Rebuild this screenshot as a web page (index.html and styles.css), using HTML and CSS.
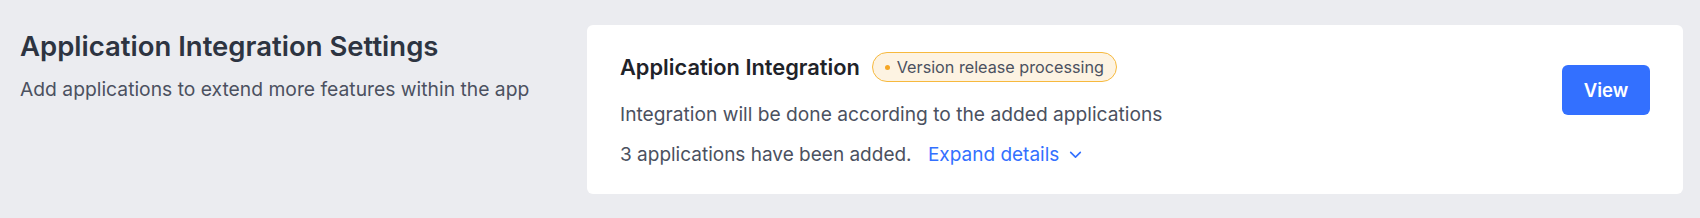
FILE: index.html
```html
<!DOCTYPE html>
<html lang="en">
<head>
    <meta charset="UTF-8">
    <meta name="viewport" content="width=device-width, initial-scale=1.0">
    <title>Application Integration Settings</title>
    <link rel="stylesheet" href="styles.css">
</head>
<body>

    <div class="settings-row">
        <!-- Описание раздела -->
        <div class="intro">
            <h2>Application Integration Settings</h2>
            <p>Add applications to extend more features within the app</p>
        </div>

        <!-- Карточка интеграции -->
        <div class="card">
            <div class="card-main">
                <div class="card-title">
                    <span>Application Integration</span>
                    <span class="badge"><span class="dot"></span>Version release processing</span>
                </div>
                <div class="card-desc">Integration will be done according to the added applications</div>
                <div class="card-count">
                    3 applications have been added.
                    <a href="#" class="expand">Expand details
                        <svg width="15" height="15" viewBox="0 0 14 14"><path d="M2.5 5 L7 9.5 L11.5 5" fill="none" stroke="currentColor" stroke-width="1.5" stroke-linecap="round" stroke-linejoin="round"/></svg>
                    </a>
                </div>
            </div>
            <button class="view-btn">View</button>
        </div>
    </div>

</body>
</html>
```

FILE: styles.css
```css
body {
    background-color: #ebecf0;
    font-family: Inter, "Noto Sans", sans-serif;
    margin: 0;
    padding: 0;
}
.settings-row {
    display: flex;
    padding: 25px 17px 24px 20px;
}
.intro {
    width: 567px;
    padding-top: 4px;
}
.intro h2 {
    margin: 0;
    font-size: 27.5px;
    line-height: 34px;
    font-weight: 600;
    color: #2d3441;
}
.intro p {
    margin: 13px 0 0;
    font-size: 19.3px;
    line-height: 26px;
    color: #4b5160;
}
.card {
    flex: 1;
    height: 169px;
    box-sizing: border-box;
    background: white;
    border-radius: 6px;
    padding: 0 33px;
    display: flex;
    justify-content: space-between;
    align-items: flex-start;
}
.card-main {
    padding-top: 27px;
}
.card-title {
    display: flex;
    align-items: center;
    height: 30px;
    font-size: 21.8px;
    font-weight: 600;
    color: #1f2329;
}
.badge {
    display: inline-flex;
    align-items: center;
    margin-left: 12px;
    height: 30px;
    box-sizing: border-box;
    padding: 0 12px 0 12px;
    border: 1.5px solid #f7b93e;
    border-radius: 15px;
    background: #fdf3e2;
    color: #4b5160;
    font-size: 16.2px;
    font-weight: 400;
}
.dot {
    width: 5px;
    height: 5px;
    border-radius: 50%;
    background: #f5a623;
    margin-right: 7px;
}
.card-desc {
    margin-top: 19px;
    font-size: 19.2px;
    line-height: 26px;
    color: #4b5160;
}
.card-count {
    margin-top: 15px;
    font-size: 19px;
    line-height: 26px;
    color: #4b5160;
}
.expand {
    color: #3370ff;
    text-decoration: none;
    margin-left: 11px;
}
.expand svg {
    vertical-align: -1px;
    margin-left: 3px;
}
.view-btn {
    margin-top: 40px;
    width: 88px;
    height: 50px;
    background: #3370ff;
    color: white;
    border: none;
    border-radius: 6px;
    font-family: inherit;
    font-size: 18.5px;
    font-weight: 600;
    cursor: pointer;
}
```
